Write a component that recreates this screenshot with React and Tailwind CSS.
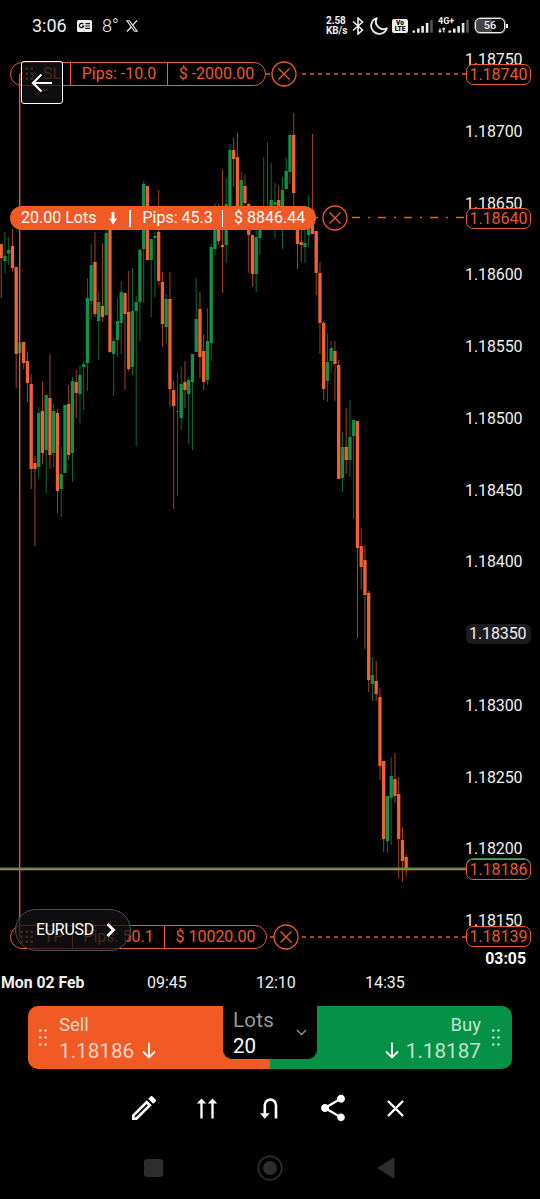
import React from "react";
import { MdShare, MdOutlineEdit } from "react-icons/md";

// [color, wick top, body top, body bottom, wick bottom]
const candles = [
  ["r", 244, 244, 258, 298],
  ["g", 232, 256, 261, 273],
  ["g", 237, 250, 253.5, 265],
  ["r", 229, 246, 268, 271],
  ["r", 267, 267, 354, 388],
  ["g", 342, 342.5, 353, 353],
  ["r", 342, 342, 363, 369],
  ["r", 352, 361, 383, 402],
  ["r", 374, 384, 469, 489],
  ["r", 456, 463, 469, 546],
  ["g", 407, 413, 467, 478],
  ["r", 381, 411, 453, 464],
  ["g", 395, 395, 450, 493],
  ["r", 354, 398, 455, 469],
  ["g", 404, 411, 453, 467],
  ["r", 409, 413, 491, 513],
  ["g", 447, 474, 489, 517],
  ["g", 405, 405, 473, 473],
  ["r", 385, 404, 455, 460],
  ["g", 377, 381, 453, 482],
  ["r", 370, 382, 393, 418],
  ["g", 365, 375, 394, 424],
  ["g", 361, 364, 367, 410],
  ["g", 278, 298, 363, 391],
  ["g", 244, 265, 301, 319],
  ["r", 232, 262, 314, 317],
  ["g", 292, 302, 321, 360],
  ["r", 243, 306, 317, 322],
  ["g", 230, 233, 315, 316],
  ["r", 228, 228, 352, 353],
  ["g", 338, 341, 354, 396],
  ["g", 298, 321, 340, 357],
  ["g", 281, 292, 323, 354],
  ["r", 293, 293, 314, 390],
  ["r", 271, 312, 369, 371],
  ["g", 268, 311, 367, 375],
  ["g", 296, 302, 311, 446],
  ["g", 249, 250, 302, 341],
  ["g", 181, 184, 249, 303],
  ["r", 186, 186, 260, 260],
  ["g", 239, 239, 260, 317],
  ["g", 232, 236, 238, 297],
  ["r", 190, 232, 281, 285],
  ["r", 272, 282, 324, 347],
  ["g", 294, 299, 327, 344],
  ["r", 272, 299, 389, 407],
  ["r", 381, 390, 406, 509],
  ["g", 373, 411, 411.6, 496],
  ["g", 367, 384, 418, 430],
  ["r", 361, 382, 390, 408],
  ["g", 377, 380, 394, 444],
  ["g", 354, 354, 382, 450],
  ["g", 278, 319, 352, 352],
  ["r", 292, 309, 357, 378],
  ["r", 334, 351, 382, 390],
  ["g", 308, 341, 380, 385],
  ["g", 244, 247, 343, 361],
  ["g", 203, 206, 249, 255],
  ["r", 204, 210, 241, 245],
  ["r", 170, 245, 247, 293],
  ["g", 178, 204, 245, 263],
  ["g", 144, 150, 207, 207],
  ["r", 138, 150, 159, 187],
  ["r", 133, 157, 208, 208],
  ["g", 172, 180, 208, 208],
  ["r", 175, 186, 203, 208],
  ["r", 203, 204, 235, 273],
  ["r", 235, 235, 274, 287],
  ["g", 230, 237, 274, 292],
  ["g", 206, 210, 238, 255],
  ["g", 157, 207, 225, 228],
  ["g", 142, 207, 226, 229],
  ["g", 163, 200, 222, 222],
  ["g", 183, 202, 205, 239],
  ["r", 186, 200, 220, 222],
  ["g", 177, 190, 212, 249],
  ["g", 158, 171, 189, 189],
  ["g", 134, 135, 172, 184],
  ["r", 113, 135, 193, 214],
  ["r", 208, 210, 244, 269],
  ["r", 229, 242, 245, 262],
  ["g", 229, 243, 247, 263],
  ["g", 195, 215, 235, 246],
  ["r", 134, 210, 234, 234],
  ["r", 231, 231, 273, 295],
  ["r", 262, 273, 323, 354],
  ["r", 321, 323, 389, 400],
  ["g", 333, 362, 381, 402],
  ["g", 341, 348, 361, 373],
  ["r", 341, 351, 364, 401],
  ["r", 360, 365, 479, 479],
  ["g", 432, 447, 478, 492],
  ["r", 408, 447, 460, 474],
  ["g", 400, 437, 460, 477],
  ["g", 420, 420, 436, 519],
  ["r", 421, 421, 548, 638],
  ["r", 528, 546, 567, 589],
  ["r", 545, 560, 595, 649],
  ["r", 591, 593, 680, 692],
  ["g", 657, 675, 684, 701],
  ["r", 661, 681, 694, 701],
  ["r", 688, 697, 766, 780],
  ["r", 761, 761, 839, 852],
  ["g", 796, 796, 841, 853],
  ["g", 757, 776, 798, 845],
  ["r", 753, 779, 796, 803],
  ["r", 777, 794, 839, 878],
  ["r", 827, 840, 861, 882],
  ["r", 854, 857, 868, 877],
];

const prices = [
  "1.18750", "1.18700", "1.18650", "1.18600", "1.18550", "1.18500", "1.18450",
  "1.18400", "1.18350", "1.18300", "1.18250", "1.18200", "1.18150",
];

const Signal = ({ className }) => (
  <svg className={className} width="22" height="14" viewBox="0 0 22 14">
    <g fill="#e8e8e8">
      <rect x="0.5" y="11.5" width="2.6" height="2.2" />
      <rect x="5" y="9.5" width="2.6" height="4.2" />
      <rect x="9.3" y="7" width="2.6" height="6.7" />
      <rect x="13.8" y="4" width="2.6" height="9.7" />
    </g>
    <rect x="18.2" y="1" width="2.6" height="12.7" fill="#555" />
  </svg>
);

const StatusBar = () => (
  <header className="flex h-[51px] items-center pl-8 pr-[35px] text-[#f0f0f0]">
    <span className="w-[45px] text-[18px] leading-none">3:06</span>
    <svg width="15" height="12" viewBox="0 0 15 12">
      <rect width="15" height="12" rx="1.5" fill="#eee" />
      <g fill="none" stroke="#111" strokeWidth="1.2">
        <path d="M6.4 4.2A2.2 2.2 0 1 0 6.7 6.2H4.8" />
        <path d="M8.3 3.7H13M8.3 6H13M8.3 8.3H13" />
      </g>
    </svg>
    <span className="ml-[10px] w-[24px] text-[18px] font-light leading-none">8°</span>
    <svg width="12" height="12" viewBox="0 0 12 12" fill="none" stroke="#eee">
      <path d="M0.8 0.7H3.4L11.2 11.3H8.6Z" strokeWidth="1.1" />
      <path d="M11 0.5L6.8 5.2M5.2 7L1 11.5" strokeWidth="1.2" />
    </svg>
    <div className="ml-auto flex items-center">
      <div className="w-[26px] text-[10px] font-bold leading-[10px] tracking-[-0.1px]">
        <div>2.58</div>
        <div>KB/s</div>
      </div>
      <svg width="12" height="18" viewBox="0 0 12 18" fill="none" stroke="#eee" strokeWidth="1.6">
        <path d="M1 4.5L10.5 13L6 17V1L10.5 5L1 13.5" />
      </svg>
      <svg className="ml-[6px]" width="18" height="18" viewBox="0 0 18 18" fill="none" stroke="#eee" strokeWidth="1.8" strokeLinejoin="round">
        <path d="M6.8 1.2A8 8 0 1 0 16.8 11.2A7.4 7.4 0 0 1 6.8 1.2Z" />
      </svg>
      <div className="ml-[4px] flex h-[14px] w-[16px] flex-col items-center justify-center rounded-[2px] bg-[#eee] text-[6.5px] font-black leading-[6px] text-black">
        <div>Vo</div>
        <div>LTE</div>
      </div>
      <Signal className="ml-[4px]" />
      <div className="relative ml-[4px] h-[17px] w-[31px]">
        <span className="absolute left-0 top-0 z-10 text-[9px] font-bold leading-none">4G+</span>
        <svg className="absolute bottom-[1px] left-0" width="9" height="6" viewBox="0 0 9 6" stroke="#eee" strokeWidth="1.1" fill="none">
          <path d="M2 5V1.2M0.6 3.6L2 5.2L3.4 3.6M5.8 5.5V1.2M4.4 2.4L5.8 1L7.2 2.4" />
        </svg>
        <Signal className="absolute -right-[1px] bottom-[1px]" />
      </div>
      <div className="relative ml-[6px] flex h-[15px] w-[30px] items-center justify-center rounded-[5px] border border-[#eee] bg-[linear-gradient(90deg,#444_56%,#000_56%)] text-[11px] font-medium leading-none ring-[0.5px] ring-[#ccc]">
        56
        <span className="absolute -right-[4px] top-[4.5px] h-1 w-[2px] bg-[#eee]" />
      </div>
    </div>
  </header>
);

const Dots = () => (
  <svg width="14" height="14" viewBox="0 0 14 14" fill="#ee5c2b">
    {[1, 6, 11].map((y) =>
      [1, 6, 11].map((x) => <rect key={`${x}-${y}`} x={x - 0.5} y={y - 0.5} width="2.4" height="2.4" />)
    )}
  </svg>
);

const CloseCircle = ({ className }) => (
  <svg className={className} width="26" height="26" viewBox="0 0 26 26" fill="none" stroke="#e85b2c" strokeWidth="1.3">
    <circle cx="13" cy="13" r="12" fill="#000" />
    <path d="M7.5 7.5L18.5 18.5M18.5 7.5L7.5 18.5" />
  </svg>
);

const Cell = ({ className, children }) => (
  <div className={`flex h-full items-center justify-center ${className}`}>{children}</div>
);

const PriceTag = ({ className, children }) => (
  <div
    className={`absolute left-[466px] flex h-[21px] w-[65px] items-center justify-center rounded-[7px] border border-[#e85b2c] bg-black text-[16px] leading-none text-[#e85b2c] ${className}`}
  >
    {children}
  </div>
);

const Chart = () => (
  <main className="relative h-[920px]">
    <svg className="absolute left-0 top-0" width="540" height="920" viewBox="0 51 540 920">
      {candles.map(([color, wickTop, top, bottom, wickBottom], i) => {
        const x = 1.2 + i * 3.75;
        const up = color === "g";
        return (
          <g key={i}>
            <rect x={x - 0.5} y={wickTop} width="1" height={wickBottom - wickTop} fill={up ? "#0b6a33" : "#a3421f"} />
            <rect x={x - 1.65} y={top} width="3.3" height={bottom - top} fill={up ? "#11914a" : "#f06234"} />
          </g>
        );
      })}
      <path d="M19.7 74V937" stroke="#e0663f" strokeWidth="1.3" />
      <path d="M0 868.2H466" stroke="#5c8a4a" strokeWidth="1.4" />
      <path d="M0 869.6H466" stroke="#c9743f" strokeWidth="1.3" />
      <g stroke="#e85b2c" strokeWidth="1.4">
        <path d="M266 74H272M302 74H466" strokeDasharray="4 4" />
        <path d="M316 217.5H318M352 217.5H466" strokeDasharray="8 8 2 8" />
        <path d="M270 937H274M302 937H466" strokeDasharray="4 4" />
      </g>
    </svg>

    {/* Price scale */}
    <div className="relative ml-auto flex w-[74px] flex-col text-[16px] leading-[18px] tracking-[-0.1px] text-[#f0f0f0]">
      {prices.map((price) => (
        <div key={price} className="h-[71.75px]">
          {price === "1.18350" ? (
            <span className="-mt-px block h-5 w-[65px] rounded-[6px] bg-[#1c1c20] pl-[3px] leading-5">{price}</span>
          ) : (
            <span className="-ml-px">{price}</span>
          )}
        </div>
      ))}
    </div>
    <PriceTag className="top-[13px]">1.18740</PriceTag>
    <PriceTag className="top-[157px]">1.18640</PriceTag>
    <div className="absolute left-[466px] top-[807px] h-[20px] w-[65px] rounded-[7px] border border-[#3d8a45] bg-black" />
    <PriceTag className="top-[808px]">1.18186</PriceTag>
    <PriceTag className="top-[875px]">1.18139</PriceTag>
    <span className="absolute right-[14px] top-[899px] text-[15.8px] font-bold leading-[18px] text-white">03:05</span>

    {/* Stop loss */}
    <div className="absolute left-[10px] top-[11px] flex h-[24px] w-[256px] items-center rounded-full border border-[#e85b2c] text-[16px] text-[#e85b2c]">
      <Cell className="w-[59px] gap-[9px]">
        <Dots /> SL
      </Cell>
      <Cell className="w-[98px] border-x border-[#e85b2c]">Pips: -10.0</Cell>
      <Cell className="flex-1">$ -2000.00</Cell>
    </div>
    <CloseCircle className="absolute left-[271px] top-[10px]" />

    {/* Open position */}
    <div className="absolute left-[10px] top-[155px] flex h-[24px] w-[306px] items-center rounded-full bg-[#f15a24] text-[16px] text-white">
      <span className="ml-[11px] w-[88px]">20.00 Lots</span>
      <svg width="8" height="13" viewBox="0 0 8 13" fill="#fff">
        <path d="M2.6 0H5.4V6.5H8L4 12.5L0 6.5H2.6Z" />
      </svg>
      <span className="ml-[12px] h-[17px] w-[1.5px] bg-white" />
      <span className="ml-[12px] w-[79px]">Pips: 45.3</span>
      <span className="h-[17px] w-[1.5px] bg-white" />
      <span className="ml-[11px] whitespace-nowrap">$ 8846.44</span>
    </div>
    <CloseCircle className="absolute left-[322px] top-[154px]" />

    {/* Take profit */}
    <div className="absolute left-[10px] top-[874px] flex h-[24px] w-[257px] items-center rounded-full border border-[#e85b2c] text-[16px] text-[#e85b2c]">
      <Cell className="w-[61px] gap-[10px]">
        <Dots /> TP
      </Cell>
      <Cell className="w-[93px] border-x border-[#e85b2c]">Pips: 50.1</Cell>
      <Cell className="flex-1">$ 10020.00</Cell>
    </div>
    <CloseCircle className="absolute left-[273px] top-[873px]" />

    <button className="absolute left-[21px] top-[10px] flex h-[43px] w-[42px] items-center justify-center rounded-[3px] border-[1.5px] border-white bg-[#131316]/75">
      <svg width="22" height="20" viewBox="0 0 22 20" fill="none" stroke="#fff" strokeWidth="2.2">
        <path d="M21 10H2.5M10.5 1.5L2 10L10.5 18.5" />
      </svg>
    </button>
    <button className="absolute left-[15px] top-[858px] flex h-[42px] w-[116px] items-center rounded-full border border-[#4a4e50] bg-[#131316]/75 pl-[20px] text-[16px] tracking-[-0.3px] text-white">
      EURUSD
      <svg className="ml-[12px]" width="10" height="14" viewBox="0 0 10 14" fill="none" stroke="#fff" strokeWidth="2.8">
        <path d="M1.5 1L7.5 7L1.5 13" />
      </svg>
    </button>
  </main>
);

const TimeAxis = () => (
  <div className="flex h-6 items-center pl-px text-[16px] text-[#f0f0f0]">
    <span className="w-[146px] text-[15.8px] font-bold">Mon 02 Feb</span>
    <span className="w-[109px]">09:45</span>
    <span className="w-[109px]">12:10</span>
    <span>14:35</span>
  </div>
);

const Grip = () => (
  <svg width="8" height="17" viewBox="0 0 8 17" fill="#fff" opacity="0.8">
    {[1.5, 8.5, 15.5].map((y) => (
      <g key={y}>
        <circle cx="1.3" cy={y} r="1.2" />
        <circle cx="6.5" cy={y} r="1.2" />
      </g>
    ))}
  </svg>
);

const ArrowDown = () => (
  <svg width="14" height="17" viewBox="0 0 14 17" fill="none" stroke="#fff" strokeWidth="1.8">
    <path d="M7 0.5V15.5M1 9.5L7 15.5L13 9.5" />
  </svg>
);

const TradePanel = () => (
  <section className="relative mx-7 mt-[11px] flex h-[63px] overflow-hidden rounded-[10px]">
    <div className="flex w-1/2 items-center bg-[#f15a24] pl-[11px] text-white/75">
      <Grip />
      <div className="ml-[12px]">
        <div className="text-[18.5px] leading-[26px]">Sell</div>
        <div className="flex items-center gap-[8px] text-[20.7px] leading-[26px]">
          1.18186 <ArrowDown />
        </div>
      </div>
    </div>
    <div className="flex w-1/2 items-center justify-end bg-[#059247] pr-[12px] text-white/75">
      <div className="mr-[11px] text-right">
        <div className="text-[18.5px] leading-[26px]">Buy</div>
        <div className="flex items-center gap-[7px] text-[20.7px] leading-[26px]">
          <ArrowDown /> 1.18187
        </div>
      </div>
      <Grip />
    </div>
    <div className="absolute left-[195px] top-0 h-[53px] w-[94px] rounded-b-[9px] bg-black pl-[10px] pt-px">
      <div className="text-[20.5px] leading-[26px] tracking-[0.3px] text-[#999]">Lots</div>
      <div className="text-[20.5px] leading-[26px] text-white">20</div>
      <svg className="absolute left-[73px] top-[23px]" width="11" height="7" viewBox="0 0 11 7" fill="none" stroke="#888" strokeWidth="1.6">
        <path d="M1 1L5.5 5.5L10 1" />
      </svg>
    </div>
  </section>
);

const Toolbar = () => (
  <div className="mt-[24px] flex h-[30px] items-center pl-[128px] text-white">
    <MdOutlineEdit className="h-[32px] w-[32px]" />
    <svg className="ml-[36px]" width="22" height="21" viewBox="0 0 22 21" fill="none" stroke="#fff" strokeWidth="2.3">
      <path d="M5.5 20.5V3M16.5 20.5V3" />
      <path d="M0.8 5.4H10.2L5.5 0.4ZM11.8 5.4H21.2L16.5 0.4Z" fill="#fff" stroke="none" />
    </svg>
    <svg className="ml-[42px]" width="18" height="21" viewBox="0 0 18 21" fill="none" stroke="#fff" strokeWidth="2.6">
      <path d="M16 20.5V7.2A5.6 5.6 0 0 0 4.8 7.2V17" />
      <path d="M0 15.3H9.6L4.8 20.7Z" fill="#fff" stroke="none" />
    </svg>
    <MdShare className="ml-[39px] h-[32px] w-[32px]" />
    <svg className="ml-[38px]" width="17" height="17" viewBox="0 0 17 17" fill="none" stroke="#fff" strokeWidth="2.4">
      <path d="M1 1L16 16M16 1L1 16" />
    </svg>
  </div>
);

const NavBar = () => (
  <nav className="mt-[31px] flex h-[28px] items-center pl-[144px]">
    <span className="h-[18px] w-[19px] rounded-[3px] bg-[#2d2d2d]" />
    <svg className="ml-[94px]" width="26" height="26" viewBox="0 0 26 26">
      <circle cx="13" cy="13" r="11.7" fill="none" stroke="#2d2d2d" strokeWidth="1.8" />
      <circle cx="13" cy="13" r="7" fill="#2d2d2d" />
    </svg>
    <svg className="ml-[94px]" width="18" height="22" viewBox="0 0 18 22" fill="#2d2d2d">
      <path d="M0 11L17.5 0V22Z" />
    </svg>
  </nav>
);

const App = () => {
  return (
    <div className="h-[1199px] w-[540px] overflow-hidden bg-black font-['Roboto',sans-serif]">
      <StatusBar />
      <Chart />
      <TimeAxis />
      <TradePanel />
      <Toolbar />
      <NavBar />
    </div>
  );
};

export default App;
